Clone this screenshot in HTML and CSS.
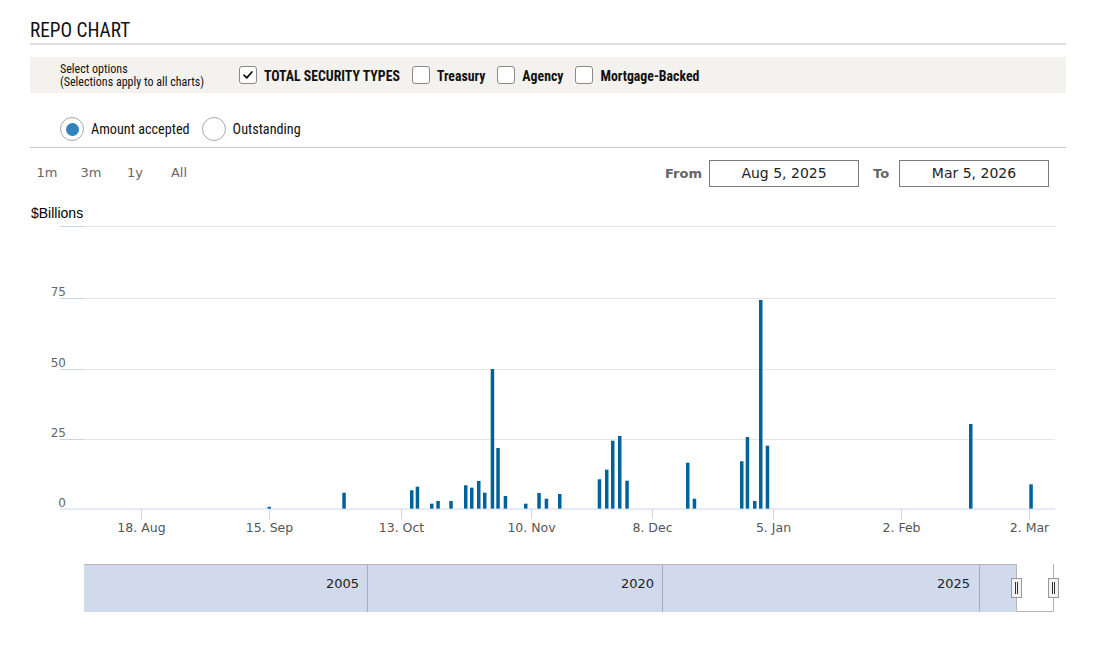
FILE: index.html
```html
<!DOCTYPE html>
<html>
<head>
<meta charset="utf-8">
<link rel="stylesheet" href="styles.css">
</head>
<body>
<div class="top">
  <h1 class="title">REPO CHART</h1>
  <div class="options">
    <div class="select-note">Select options<br>(Selections apply to all charts)</div>
    <label class="opt"><span class="box checked"><svg viewBox="0 0 18 18" width="18" height="18"><path d="M4.5 9.2 L7.6 12.2 L13.4 5.6" fill="none" stroke="#111" stroke-width="2" stroke-linecap="round" stroke-linejoin="round"/></svg></span><span class="opt-text">TOTAL SECURITY TYPES</span></label>
    <label class="opt"><span class="box"></span><span class="opt-text">Treasury</span></label>
    <label class="opt"><span class="box"></span><span class="opt-text">Agency</span></label>
    <label class="opt"><span class="box"></span><span class="opt-text">Mortgage-Backed</span></label>
  </div>
  <div class="radios">
    <label class="radio"><span class="circle on"><span class="dot"></span></span><span class="radio-text">Amount accepted</span></label>
    <label class="radio"><span class="circle"></span><span class="radio-text">Outstanding</span></label>
  </div>
  <div class="range-row">
    <div class="ranges">
      <span class="range-btn">1m</span>
      <span class="range-btn">3m</span>
      <span class="range-btn">1y</span>
      <span class="range-btn">All</span>
    </div>
    <div class="dates">
      <span class="date-label">From</span>
      <span class="date-box">Aug 5, 2025</span>
      <span class="date-label to">To</span>
      <span class="date-box">Mar 5, 2026</span>
    </div>
  </div>
</div>
<svg class="chart" width="1100" height="446" viewBox="0 200 1100 446">
  <text x="31" y="218" class="unit">$Billions</text>
  <g class="grid">
    <path d="M84 226.5 H1055 M84 298.5 H1055 M84 369.5 H1055 M84 439.5 H1055"/>
  </g>
  <g class="grid-blue">
    <path d="M60 226.5 H84 M60 298.5 H84 M60 369.5 H84 M60 439.5 H84"/>
  </g>
  <g class="ylabels">
    <text x="66" y="295.7">75</text>
    <text x="66" y="366.7">50</text>
    <text x="66" y="436.7">25</text>
    <text x="66" y="506.5">0</text>
  </g>
  <path class="axis" d="M60 509 H1055"/>
  <path class="ticks" d="M141.5 509 V519 M269.5 509 V519 M401.5 509 V519 M531.5 509 V519 M652.5 509 V519 M773.5 509 V519 M901.5 509 V519 M1029.5 509 V519"/>
  <g class="xlabels">
    <text x="141.5" y="532">18. Aug</text>
    <text x="269.5" y="532">15. Sep</text>
    <text x="401.5" y="532">13. Oct</text>
    <text x="531.5" y="532">10. Nov</text>
    <text x="652.5" y="532">8. Dec</text>
    <text x="773.5" y="532">5. Jan</text>
    <text x="901.5" y="532">2. Feb</text>
    <text x="1029.5" y="532">2. Mar</text>
  </g>
  <g class="bars">
    <rect x="267.5" y="506.8" width="3.5" height="1.8"/>
    <rect x="342.3" y="492.7" width="3.5" height="15.9"/>
    <rect x="410" y="490.3" width="3.5" height="18.3"/>
    <rect x="415.7" y="486.7" width="3.5" height="21.9"/>
    <rect x="430" y="503.7" width="3.5" height="4.9"/>
    <rect x="436.3" y="501" width="3.5" height="7.6"/>
    <rect x="449.3" y="501" width="3.5" height="7.6"/>
    <rect x="464" y="485.3" width="3.5" height="23.3"/>
    <rect x="470" y="487.7" width="3.5" height="20.9"/>
    <rect x="477" y="481" width="3.5" height="27.6"/>
    <rect x="483" y="492.7" width="3.5" height="15.9"/>
    <rect x="490.7" y="369" width="3.5" height="139.6"/>
    <rect x="496.3" y="448" width="3.5" height="60.6"/>
    <rect x="503.7" y="496" width="3.5" height="12.6"/>
    <rect x="524" y="503.7" width="3.5" height="4.9"/>
    <rect x="537.3" y="493" width="3.5" height="15.6"/>
    <rect x="544.7" y="498.7" width="3.5" height="9.9"/>
    <rect x="558" y="494" width="3.5" height="14.6"/>
    <rect x="597.7" y="479.3" width="3.5" height="29.3"/>
    <rect x="605" y="469.7" width="3.5" height="38.9"/>
    <rect x="611" y="440.7" width="3.5" height="67.9"/>
    <rect x="618" y="436" width="3.5" height="72.6"/>
    <rect x="625.3" y="480.7" width="3.5" height="27.9"/>
    <rect x="686" y="462.7" width="3.5" height="45.9"/>
    <rect x="692.7" y="498.7" width="3.5" height="9.9"/>
    <rect x="740" y="461.3" width="3.5" height="47.3"/>
    <rect x="745.7" y="437" width="3.5" height="71.6"/>
    <rect x="753" y="501" width="3.5" height="7.6"/>
    <rect x="759" y="300" width="3.5" height="208.6"/>
    <rect x="765.7" y="445.7" width="3.5" height="62.9"/>
    <rect x="969" y="424" width="3.5" height="84.6"/>
    <rect x="1029.3" y="484.3" width="3.5" height="24.3"/>
  </g>
  <rect class="nav-mask" x="84" y="564.5" width="932.5" height="47.5"/>
  <path class="nav-sep" d="M367.5 564.5 V612 M662.5 564.5 V612 M979.5 564.5 V612"/>
  <g class="navlabels">
    <text x="359" y="588">2005</text>
    <text x="654" y="588">2020</text>
    <text x="970" y="588">2025</text>
  </g>
  <path class="nav-outline" d="M84 564.5 H1016.5 V611.5 H1053.5 V564"/>
  <g class="handle">
    <rect x="1011.5" y="578.5" width="10" height="19"/>
    <path d="M1015.5 582 V594 M1017.5 582 V594"/>
  </g>
  <g class="handle">
    <rect x="1048.5" y="578.5" width="10" height="19"/>
    <path d="M1052.5 582 V594 M1054.5 582 V594"/>
  </g>
</svg>
</body>
</html>
```
FILE: styles.css
```css
html, body {
  margin: 0;
  padding: 0;
  background: #fff;
}
body {
  width: 1100px;
  height: 646px;
  overflow: hidden;
  font-family: "Roboto Condensed", "DejaVu Sans Condensed", "Liberation Sans Narrow", Roboto, sans-serif;
  color: #111;
}
.top {
  margin: 0 34px 0 30px;
}
.title {
  margin: 0;
  padding-top: 19px;
  padding-bottom: 0;
  font-size: 19.3px;
  line-height: 24px;
  font-weight: 400;
  border-bottom: 2px solid #dedede;
}
.options {
  margin-top: 12px;
  height: 36px;
  background: #f4f2ee;
  display: flex;
  align-items: center;
  padding-left: 30px;
}
.select-note {
  width: 179px;
  font-size: 12px;
  line-height: 12.6px;
  margin-top: 1px;
}
.opt {
  display: flex;
  align-items: center;
  margin-right: 12px;
}
.box {
  width: 16px;
  height: 16px;
  border: 1px solid #8a8a8a;
  border-radius: 3px;
  background: #fff;
  display: flex;
  align-items: center;
  justify-content: center;
  box-sizing: content-box;
}
.box svg {
  display: block;
}
.opt-text {
  margin-left: 7px;
  font-size: 13.8px;
  font-weight: 700;
  margin-top: 1px;
}
.radios {
  display: flex;
  align-items: center;
  padding: 24px 0 6px 30px;
  border-bottom: 1px solid #c8c8c8;
}
.radio {
  display: flex;
  align-items: center;
  margin-right: 12px;
}
.circle {
  width: 22px;
  height: 22px;
  border: 1px solid #a8a8a8;
  border-radius: 50%;
  background: #fff;
  display: flex;
  align-items: center;
  justify-content: center;
}
.dot {
  width: 13px;
  height: 13px;
  border-radius: 50%;
  background: #3182bd;
}
.radio-text {
  margin-left: 7px;
  font-size: 14.2px;
}
.range-row {
  height: 52px;
  display: flex;
  align-items: center;
  justify-content: space-between;
  font-family: "DejaVu Sans", sans-serif;
}
.ranges {
  display: flex;
  margin-left: -5px;
  margin-top: -3px;
}
.range-btn {
  width: 44px;
  text-align: center;
  font-size: 13px;
  color: #666;
}
.dates {
  display: flex;
  align-items: center;
  margin-right: 17px;
  margin-top: -2px;
}
.date-label {
  font-size: 13px;
  font-weight: 700;
  color: #666;
  margin-right: 7px;
}
.date-label.to {
  margin-left: 14px;
  min-width: 19px;
}
.date-box {
  width: 148px;
  height: 25px;
  border: 1px solid #7a7a7a;
  font-size: 14px;
  line-height: 24px;
  text-align: center;
  color: #222;
}
.chart {
  display: block;
  font-family: "DejaVu Sans", sans-serif;
}
.unit {
  font-family: "Liberation Sans", Arial, sans-serif;
  font-size: 14px;
  fill: #000;
}
.grid path {
  stroke: #e6e6e6;
  stroke-width: 1;
  fill: none;
}
.grid-blue path {
  stroke: #ccd6eb;
  stroke-width: 1;
  fill: none;
}
.ylabels text {
  font-size: 12px;
  fill: #666;
  text-anchor: end;
}
.axis {
  stroke: #ccd6eb;
  stroke-width: 1;
  fill: none;
}
.ticks {
  stroke: #ccd6eb;
  stroke-width: 1;
  fill: none;
}
.xlabels text {
  font-size: 12.5px;
  fill: #555;
  text-anchor: middle;
}
.bars rect {
  fill: #00629b;
}
.nav-mask {
  fill: rgba(102, 133, 194, 0.3);
}
.nav-sep {
  stroke: #a3adc0;
  stroke-width: 1;
  fill: none;
}
.navlabels text {
  font-size: 13px;
  fill: #222;
  text-anchor: end;
}
.nav-outline {
  stroke: #b5b5b5;
  stroke-width: 1;
  fill: none;
}
.handle rect {
  fill: #f2f2f2;
  stroke: #999;
  stroke-width: 1;
}
.handle path {
  stroke: #333;
  stroke-width: 1;
  fill: none;
}
```
